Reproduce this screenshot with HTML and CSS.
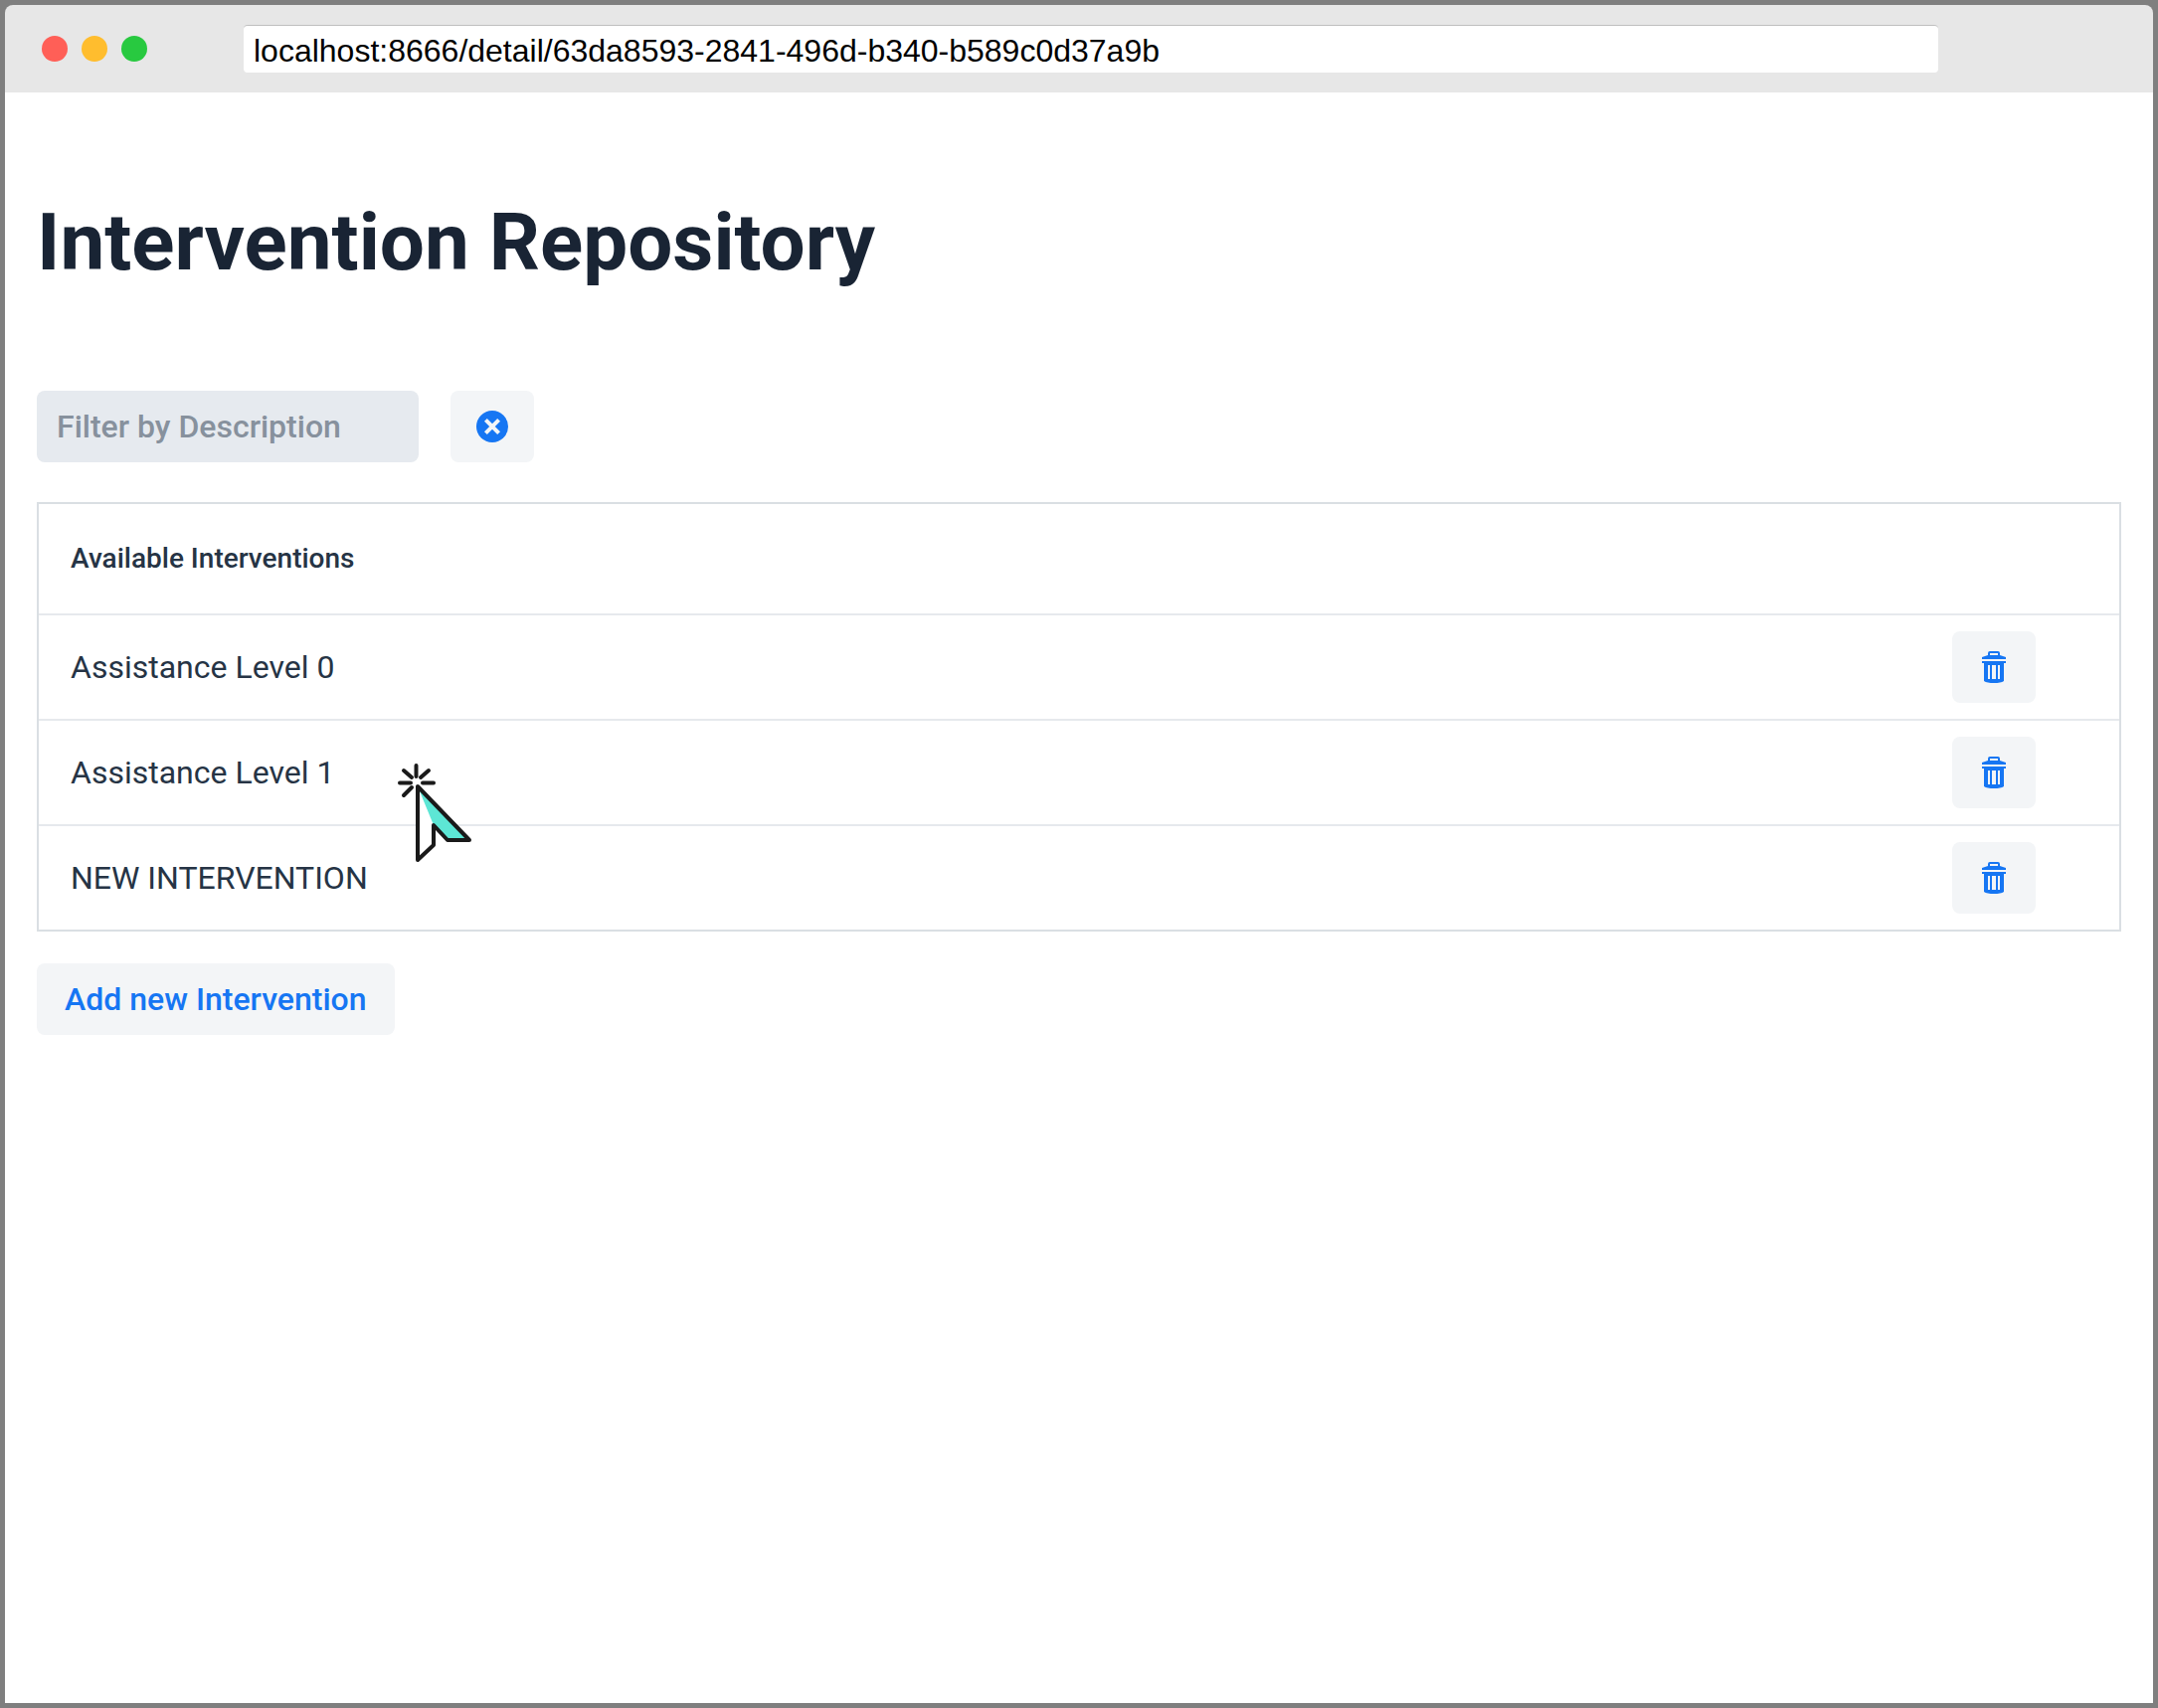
FILE: index.html
```html
<!DOCTYPE html>
<html lang="en">
<head>
  <meta charset="utf-8">
  <meta name="viewport" content="width=device-width, initial-scale=1">
  <title>Intervention Repository</title>
  <link rel="stylesheet" href="styles.css">
</head>
<body>
  <svg class="sprite" aria-hidden="true">
    <symbol id="trash" viewBox="0 0 16 16">
      <path fill-rule="evenodd" d="M2 4V3L5 2V1Q5 0 6 0H10Q11 0 11 1V2L14 3V4ZM6 1V2H10V1Z"/>
      <path fill-rule="evenodd" d="M2 5H14V6H13V15Q11.500 16 8 16Q4.500 16 3 15V6H2ZM5 7V14H6V7ZM7 7V14H9V7ZM10 7V14H11V7Z"/>
    </symbol>
    <symbol id="close-circle" viewBox="0 0 16 16">
      <circle cx="8" cy="8" r="8"/>
      <path class="cross" d="M4.700 4.700L11.300 11.300M11.300 4.700L4.700 11.300"/>
    </symbol>
  </svg>

  <div class="window">
    <header class="titlebar">
      <div class="lights">
        <span class="light light-close"></span>
        <span class="light light-minimize"></span>
        <span class="light light-zoom"></span>
      </div>
      <input class="address" type="text" aria-label="Address" value="localhost:8666/detail/63da8593-2841-496d-b340-b589c0d37a9b">
    </header>

    <main class="page">
      <h1 class="title">Intervention Repository</h1>

      <div class="toolbar">
        <input class="filter" type="text" placeholder="Filter by Description" aria-label="Filter by Description">
        <button class="button icon-button" type="button" aria-label="Clear filter"><svg class="icon"><use href="#close-circle"/></svg></button>
      </div>

      <div class="grid-wrap">
        <table class="grid">
          <thead>
            <tr><th scope="col">Available Interventions</th><td class="actions"></td></tr>
          </thead>
          <tbody>
            <tr>
              <td>Assistance Level 0</td>
              <td class="actions"><button class="button icon-button" type="button" aria-label="Delete Assistance Level 0"><svg class="icon"><use href="#trash"/></svg></button></td>
            </tr>
            <tr>
              <td>Assistance Level 1</td>
              <td class="actions"><button class="button icon-button" type="button" aria-label="Delete Assistance Level 1"><svg class="icon"><use href="#trash"/></svg></button></td>
            </tr>
            <tr>
              <td>NEW INTERVENTION</td>
              <td class="actions"><button class="button icon-button" type="button" aria-label="Delete NEW INTERVENTION"><svg class="icon"><use href="#trash"/></svg></button></td>
            </tr>
          </tbody>
        </table>
        <svg class="pointer" viewBox="0 0 80 104" aria-hidden="true">
          <path class="pointer-light" d="M20 27V101L36 86V66Z"/>
          <path class="pointer-shade" d="M20 27L36 66L50 81H72Z"/>
          <path class="pointer-line" d="M20 27V101L36 86V66L50 81H72Z"/>
          <path class="pointer-line rays" d="M18.500 6V17M6 11L14 18M31 11L23 18M2 23.500H13M25 23.500H36M6 36L14 28"/>
        </svg>
      </div>

      <button class="button add-button" type="button">Add new Intervention</button>
    </main>
  </div>
</body>
</html>
```

FILE: styles.css
```css
*,
*::before,
*::after {
  box-sizing: border-box;
}

body {
  margin: 0;
  background: #7f7f7f;
  color: #263445;
  font-family: Roboto, sans-serif;
  font-size: 32px;
  line-height: 40px;
}

.sprite {
  position: absolute;
  width: 0;
  height: 0;
}

.window {
  display: flex;
  flex-direction: column;
  min-height: 100vh;
  border: 5px solid #7f7f7f;
}

.titlebar {
  display: flex;
  align-items: center;
  height: 88px;
  padding: 0 216px 0 37px;
  background: #e7e7e7;
  border-radius: 8px 8px 0 0;
}

.lights {
  display: flex;
  gap: 14px;
  width: 203px;
}

.light {
  width: 26px;
  height: 26px;
  border-radius: 50%;
}

.light-close {
  background: #ff5f57;
}

.light-minimize {
  background: #ffbd2e;
}

.light-zoom {
  background: #28c940;
}

.address {
  flex: 1;
  min-width: 0;
  height: 48px;
  padding: 4px 10px 0;
  border: 0;
  border-top: 1px solid #bfbfbf;
  border-radius: 4px;
  background: #fff;
  color: #000;
  font-family: "Liberation Sans", Arial, sans-serif;
  font-size: 32px;
}

.page {
  flex: 1;
  padding: 101px 32px 32px;
  background: #fff;
}

.title {
  margin: 0 0 99px;
  color: #192434;
  font-size: 80px;
  font-weight: 700;
  line-height: 100px;
}

.toolbar {
  display: flex;
  gap: 32px;
  margin-bottom: 40px;
}

.filter {
  width: 384px;
  height: 72px;
  padding: 0 20px;
  border: 0;
  border-radius: 8px;
  background: #e6eaef;
  color: #263445;
  font: 500 32px Roboto, sans-serif;
}

.filter::placeholder {
  color: #87919d;
  opacity: 1;
}

.button {
  display: flex;
  align-items: center;
  justify-content: center;
  height: 72px;
  border: 0;
  border-radius: 8px;
  background: #f3f5f7;
  color: #1676f3;
  font: 500 32px Roboto, sans-serif;
}

.icon-button {
  width: 84px;
  padding: 0;
}

.icon {
  width: 32px;
  height: 32px;
  fill: currentColor;
}

.cross {
  fill: none;
  stroke: #f3f5f7;
  stroke-width: 2;
}

.grid-wrap {
  position: relative;
  margin-bottom: 32px;
  border: 2px solid #dadfe3;
}

.grid {
  width: 100%;
  border-collapse: separate;
  border-spacing: 0;
}

.grid th,
.grid td {
  height: 106px;
  padding: 0 32px;
  border-bottom: 2px solid #e6e9ed;
  text-align: left;
}

.grid th,
.grid thead td {
  height: 112px;
  font-size: 28px;
  font-weight: 500;
}

.grid tbody tr:last-child td {
  height: 104px;
  border-bottom: 0;
}

.grid .actions {
  width: 200px;
}

.pointer {
  position: absolute;
  top: 257px;
  left: 361px;
  width: 80px;
  height: 104px;
}

.pointer-light {
  fill: #fff;
}

.pointer-shade {
  fill: #5de6d5;
}

.pointer-line {
  fill: none;
  stroke: #1a1a1a;
  stroke-width: 4;
  stroke-linejoin: round;
}

.pointer-line.rays {
  stroke-linecap: round;
}

.add-button {
  padding: 0 28px;
}
```
